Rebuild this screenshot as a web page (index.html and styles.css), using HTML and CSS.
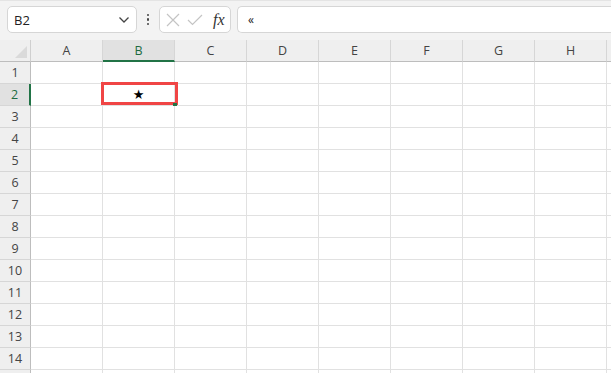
FILE: index.html
```html
<!DOCTYPE html>
<html>
<head>
<meta charset="utf-8">
<link rel="stylesheet" href="styles.css">
</head>
<body>
<div class="topbar">
  <div class="namebox">
    <span class="nametext">B2</span>
    <svg class="chev" width="12" height="8" viewBox="0 0 12 8"><path d="M1.5 1.5 L6 6 L10.5 1.5" fill="none" stroke="#444" stroke-width="1.3"/></svg>
  </div>
  <div class="dots"><i></i><i></i><i></i></div>
  <div class="fxbox">
    <svg width="14" height="14" viewBox="0 0 14 14"><path d="M1 1 L13 13 M13 1 L1 13" stroke="#c4c4c4" stroke-width="1.2" fill="none"/></svg>
    <svg width="16" height="12" viewBox="0 0 16 12"><path d="M1 6 L5.5 10.5 L15 1" stroke="#c4c4c4" stroke-width="1.2" fill="none"/></svg>
    <span class="fx">fx</span>
  </div>
  <div class="formula"><span>«</span></div>
</div>
<div class="sheet">
  <div class="corner"><span class="tri"></span></div>
  <div class="ch">A</div><div class="ch sel">B</div><div class="ch">C</div><div class="ch">D</div><div class="ch">E</div><div class="ch">F</div><div class="ch">G</div><div class="ch">H</div><div class="ch rest"></div>

  <div class="rh">1</div><div class="c"></div><div class="c"></div><div class="c"></div><div class="c"></div><div class="c"></div><div class="c"></div><div class="c"></div><div class="c"></div><div class="c rest"></div>
  <div class="rh sel">2</div><div class="c"></div><div class="c star">★</div><div class="c"></div><div class="c"></div><div class="c"></div><div class="c"></div><div class="c"></div><div class="c"></div><div class="c rest"></div>
  <div class="rh">3</div><div class="c"></div><div class="c"></div><div class="c"></div><div class="c"></div><div class="c"></div><div class="c"></div><div class="c"></div><div class="c"></div><div class="c rest"></div>
  <div class="rh">4</div><div class="c"></div><div class="c"></div><div class="c"></div><div class="c"></div><div class="c"></div><div class="c"></div><div class="c"></div><div class="c"></div><div class="c rest"></div>
  <div class="rh">5</div><div class="c"></div><div class="c"></div><div class="c"></div><div class="c"></div><div class="c"></div><div class="c"></div><div class="c"></div><div class="c"></div><div class="c rest"></div>
  <div class="rh">6</div><div class="c"></div><div class="c"></div><div class="c"></div><div class="c"></div><div class="c"></div><div class="c"></div><div class="c"></div><div class="c"></div><div class="c rest"></div>
  <div class="rh">7</div><div class="c"></div><div class="c"></div><div class="c"></div><div class="c"></div><div class="c"></div><div class="c"></div><div class="c"></div><div class="c"></div><div class="c rest"></div>
  <div class="rh">8</div><div class="c"></div><div class="c"></div><div class="c"></div><div class="c"></div><div class="c"></div><div class="c"></div><div class="c"></div><div class="c"></div><div class="c rest"></div>
  <div class="rh">9</div><div class="c"></div><div class="c"></div><div class="c"></div><div class="c"></div><div class="c"></div><div class="c"></div><div class="c"></div><div class="c"></div><div class="c rest"></div>
  <div class="rh">10</div><div class="c"></div><div class="c"></div><div class="c"></div><div class="c"></div><div class="c"></div><div class="c"></div><div class="c"></div><div class="c"></div><div class="c rest"></div>
  <div class="rh">11</div><div class="c"></div><div class="c"></div><div class="c"></div><div class="c"></div><div class="c"></div><div class="c"></div><div class="c"></div><div class="c"></div><div class="c rest"></div>
  <div class="rh">12</div><div class="c"></div><div class="c"></div><div class="c"></div><div class="c"></div><div class="c"></div><div class="c"></div><div class="c"></div><div class="c"></div><div class="c rest"></div>
  <div class="rh">13</div><div class="c"></div><div class="c"></div><div class="c"></div><div class="c"></div><div class="c"></div><div class="c"></div><div class="c"></div><div class="c"></div><div class="c rest"></div>
  <div class="rh">14</div><div class="c"></div><div class="c"></div><div class="c"></div><div class="c"></div><div class="c"></div><div class="c"></div><div class="c"></div><div class="c"></div><div class="c rest"></div>
  <div class="rh"></div><div class="c"></div><div class="c"></div><div class="c"></div><div class="c"></div><div class="c"></div><div class="c"></div><div class="c"></div><div class="c"></div><div class="c rest"></div>

  <div class="selbox"></div>
  <div class="handle"></div>
</div>
</body>
</html>
```

FILE: styles.css
```css
* { box-sizing: border-box; }
html, body { margin: 0; padding: 0; }
body {
  width: 611px;
  height: 373px;
  overflow: hidden;
  background: #ffffff;
  font-family: "Open Sans", "Noto Sans", sans-serif;
  color: #333;
}
.topbar {
  height: 40px;
  background: #f3f3f3;
  display: flex;
  align-items: flex-start;
  padding: 5px 0 0 7px;
  border-top: 1px solid #e4e4e4;
}
.namebox {
  width: 130px;
  height: 27px;
  background: #fff;
  border: 1px solid #d6d6d6;
  border-radius: 5px;
  display: flex;
  align-items: center;
  justify-content: space-between;
  padding: 0 6px 0 6px;
}
.nametext { font-size: 13px; color: #222; }
.chev { margin-top: 1px; }
.dots {
  width: 22px;
  height: 27px;
  display: flex;
  flex-direction: column;
  align-items: center;
  justify-content: center;
  gap: 2px;
}
.dots i {
  display: block;
  width: 2.5px;
  height: 2.5px;
  background: #444;
  border-radius: 50%;
}
.fxbox {
  width: 72px;
  height: 27px;
  background: #fff;
  border: 1px solid #d6d6d6;
  border-radius: 5px;
  display: flex;
  align-items: center;
  padding: 0 4px 0 6px;
  gap: 7px;
}
.fx {
  font-family: "Liberation Serif", "DejaVu Serif", serif;
  font-style: italic;
  font-size: 16px;
  color: #333;
  margin-left: 3px;
}
.formula {
  margin-left: 6px;
  flex: 1;
  height: 27px;
  background: #fff;
  border: 1px solid #d6d6d6;
  border-right: none;
  border-radius: 5px 0 0 5px;
  display: flex;
  align-items: center;
  padding-left: 10px;
  font-size: 12px;
  color: #222;
}
.sheet {
  position: relative;
  display: grid;
  grid-template-columns: 31px repeat(8, 72px) 1fr;
  grid-auto-rows: 22px;
}
.corner {
  position: relative;
  background: #efefef;
  border-right: 1px solid #cfcfcf;
  border-bottom: 1px solid #bdbdbd;
}
.tri {
  position: absolute;
  right: 3px;
  bottom: 3px;
  width: 0;
  height: 0;
  border-left: 12px solid transparent;
  border-bottom: 12px solid #dadada;
}
.ch {
  background: #efefef;
  border-right: 1px solid #d6d6d6;
  border-bottom: 1px solid #bdbdbd;
  display: flex;
  align-items: center;
  justify-content: center;
  font-size: 12.5px;
  color: #444;
}
.ch.sel {
  background: #e1e1e1;
  color: #1d6b41;
  border-bottom: 2px solid #217346;
}
.ch.rest { border-right: none; }
.rh {
  background: #efefef;
  border-right: 1px solid #bdbdbd;
  border-bottom: 1px solid #d6d6d6;
  display: flex;
  align-items: center;
  justify-content: center;
  font-size: 12.5px;
  color: #444;
}
.rh.sel {
  background: #e1e1e1;
  color: #1d6b41;
  border-right: 2px solid #217346;
}
.c {
  border-right: 1px solid #e1e1e1;
  border-bottom: 1px solid #e1e1e1;
}
.c.rest { border-right: none; }
.star {
  display: flex;
  align-items: center;
  justify-content: center;
  font-family: "DejaVu Sans", sans-serif;
  font-size: 13px;
  color: #000;
}
.selbox {
  position: absolute;
  left: 101px;
  top: 42px;
  width: 77px;
  height: 23px;
  border: 3px solid #f04545;
}
.handle {
  position: absolute;
  left: 173px;
  top: 63px;
  width: 4px;
  height: 3px;
  background: #217346;
}
```
